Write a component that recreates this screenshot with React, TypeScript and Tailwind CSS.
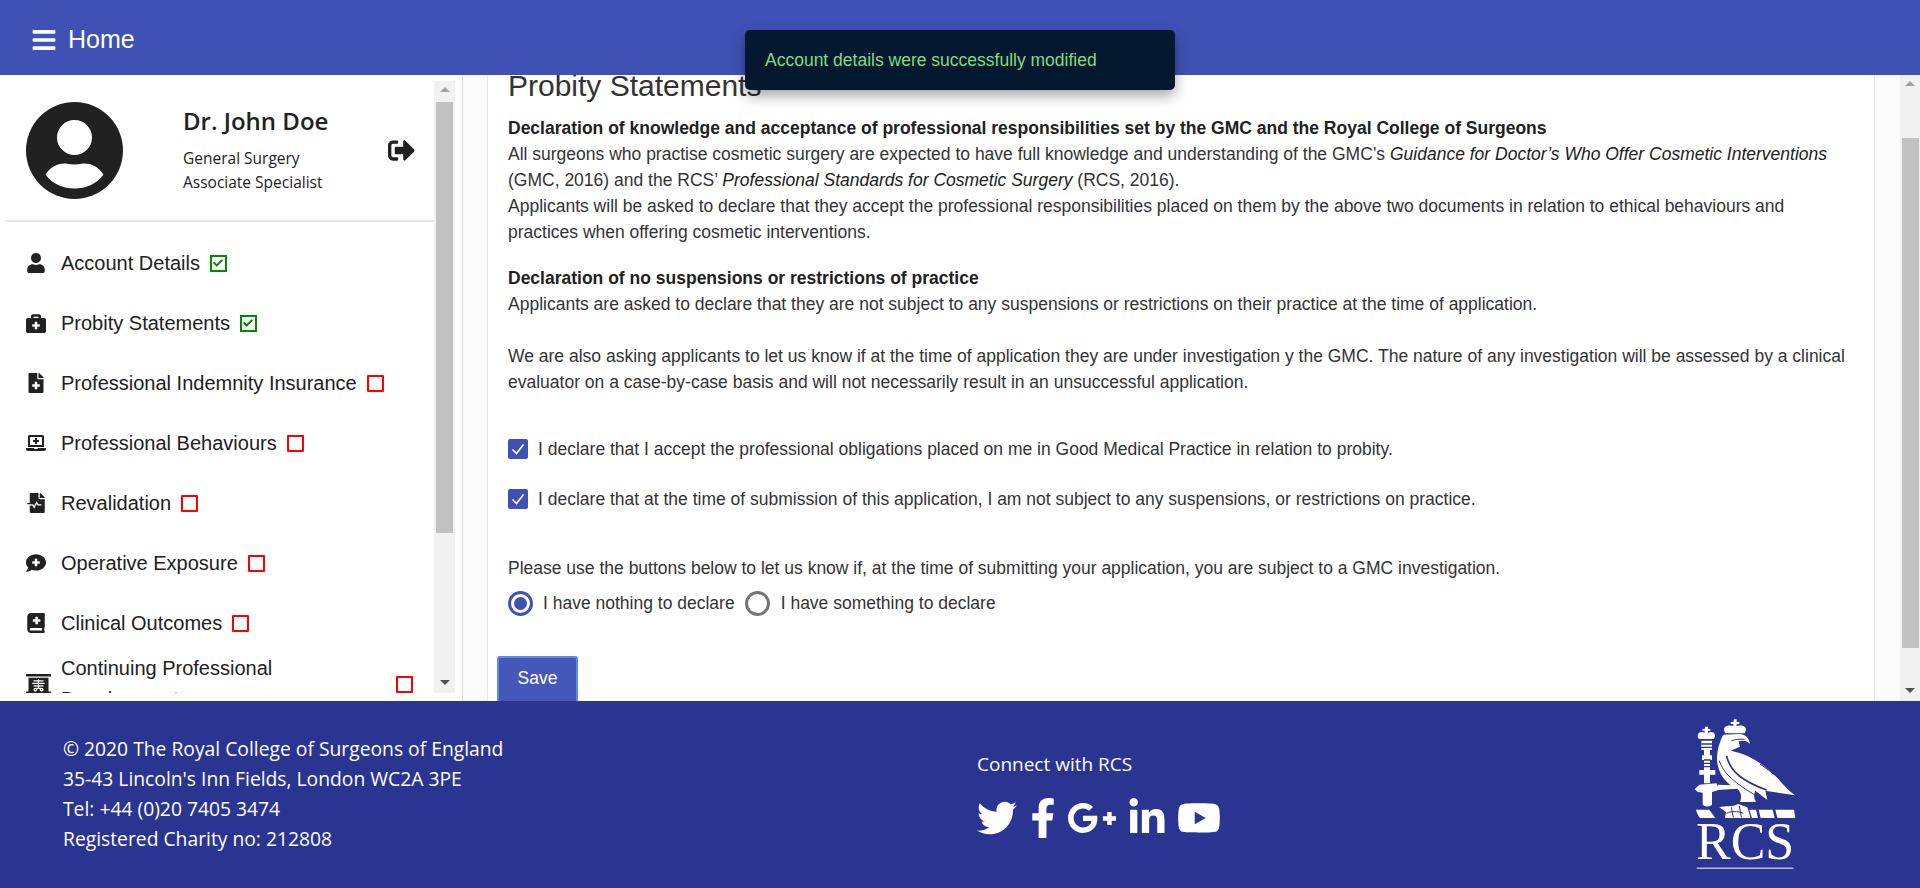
import React from 'react';
import {
  FaBars, FaBookMedical, FaBriefcaseMedical, FaCheck, FaCommentMedical, FaFacebookF, FaFileMedical,
  FaFileMedicalAlt, FaGooglePlusG, FaLaptopMedical, FaLinkedinIn, FaSignOutAlt, FaTwitter, FaUser, FaXRay, FaYoutube,
} from 'react-icons/fa';

const navItems = [
  { label: 'Account Details', icon: <FaUser size={20} />, done: true },
  { label: 'Probity Statements', icon: <FaBriefcaseMedical size={20} />, done: true },
  { label: 'Professional Indemnity Insurance', icon: <FaFileMedical size={20} />, done: false },
  { label: 'Professional Behaviours', icon: <FaLaptopMedical size={20} />, done: false },
  { label: 'Revalidation', icon: <FaFileMedicalAlt size={20} />, done: false },
  { label: 'Operative Exposure', icon: <FaCommentMedical size={20} />, done: false },
  { label: 'Clinical Outcomes', icon: <FaBookMedical size={20} />, done: false },
];

const StatusBox = ({ done }: { done: boolean }) =>
  done ? (
    <span className="ml-[10px] flex h-[17px] w-[17px] shrink-0 items-center justify-center border-2 border-[#008a00] text-[#008a00]">
      <FaCheck size={10} />
    </span>
  ) : (
    <span className="ml-[10px] h-[17px] w-[17px] shrink-0 rounded-[1px] border-2 border-[#ff0000]" />
  );

const Scrollbar = ({ top, thumb, thumbWidth }: { top: number; thumb: number; thumbWidth: string }) => (
  <div className="relative flex h-full w-full flex-col items-center bg-[#f1f1f1]">
    <div className="absolute top-[6px] h-0 w-0 border-x-[5px] border-b-[5px] border-x-transparent border-b-[#a3a3a3]" />
    <div className={`absolute bg-[#c1c1c1] ${thumbWidth}`} style={{ top, height: thumb }} />
    <div className="absolute bottom-[8px] h-0 w-0 border-x-[5px] border-t-[5px] border-x-transparent border-t-[#505050]" />
  </div>
);

const Avatar = () => (
  <svg width="97" height="97" viewBox="0 0 97 97" className="shrink-0">
    <circle cx="48.5" cy="48.5" r="48.5" fill="#212121" />
    <circle cx="48.5" cy="35.5" r="17.5" fill="#fff" />
    <path d="M19.5 72.5C25 64 33 61 40 61.5c6 1.300 11 1.300 17 0C64 61 72 64 77.500 72.500C71 82 60 86.500 48.500 86.500S26 82 19.500 72.500Z" fill="#fff" />
  </svg>
);

const CheckedBox = () => (
  <span className="flex h-[20px] w-[20px] shrink-0 items-center justify-center rounded-[2px] bg-[#3f51b5] text-white">
    <svg width="14" height="14" viewBox="0 0 14 14" fill="none" stroke="#fff" strokeWidth="1.600"><path d="M1.500 7.500 5.500 11.500 12.500 2.500" /></svg>
  </span>
);

const RcsLogo = () => (
  <div className="relative h-[187px] w-[160px]">
    <svg width="160" height="188" viewBox="0 3 480 564" className="absolute inset-0">
      <g fill="#fff">
        {/* left crown */}
        <path d="M136 80h8v7h7v5h-7v6c8-4 21-2 21 9 0 4-2 8-5 10h-42c-3-2-5-6-5-10 0-11 13-13 21-9v-6h-7v-5h7z" />
        {/* sceptre */}
        <path d="M124 122h32v28h-6v16h6v14h-6v30h16v14h-16v26h-18v-26h-14v-14h14v-30h-6v-14h6v-16h-8z" />
        <path d="M104 268l14-14 52-4 6 20-20 6v36c0 10-28 10-28 0v-34l-14-2z" />
        {/* eagle crown */}
        <path d="M222 58h8v8h8v6h-8v6c10-4 28-2 28 10 0 5-2 9-5 12h-56c-3-3-5-7-5-12 0-12 18-14 28-10v-6h-8v-6h8z" />
        {/* head, body and wing */}
        <path d="M190 104C178 125 168 160 172 190c4 25 18 50 40 66l-38-2-2 16 60-4c12 10 14 26 8 40h48c-8-14-6-24-2-34l36 28-6-28 89 14C370 260 350 225 320 205 285 175 250 160 212 152l28-12-4-16c14-4 26-2 34 8-2-17-12-28-30-30z" />
        {/* talons */}
        <path d="M178 322c17-6 37 0 57-10l27 10 10 32-77 0 3-18z" />
        {/* band */}
        <path d="M108 329h40l18 25h-46c-6-8-10-17-12-25zM268 329h20l6 25h-18zM296 329h42l6 25h-42zM346 329h56l4 25h-54z" />
        <rect x="110" y="503" width="290" height="3" />
      </g>
      <g fill="none" stroke="#2a3592" strokeWidth="4">
        <path d="M124 132h32M124 142h32M132 180h20M132 190h20M132 200h20" />
        <path d="M178 182c12 38 47 68 112 106" strokeWidth="3" />
        <path d="M200 168c10 47 50 77 120 102" strokeWidth="5" />
        <path d="M300 192l45 32M330 214l36 28" strokeWidth="3" />
        <path d="M214 122c12-4 26-5 40-4" strokeWidth="3" />
        <path d="M200 340c12-6 32-8 50 0M214 322l6 30M238 318l6 34" strokeWidth="3" />
      </g>
    </svg>
    <span className="absolute left-[36px] top-[111px] font-['Liberation_Serif',serif] text-[52px] leading-[60px] text-white">RCS</span>
  </div>
);

export default function App() {
  return (
    <div className="relative flex h-[888px] w-[1920px] flex-col overflow-hidden bg-white font-['Liberation_Sans',Arial,sans-serif] text-[17.5px] text-[#333]">
      <header className="relative z-10 flex h-[75px] shrink-0 items-center bg-[#3f51b5] pl-[31px] pt-[4px] text-white">
        <FaBars size={26} />
        <span className="ml-[11px] text-[25px]">Home</span>
      </header>

      <div className="absolute left-[745px] top-[30px] z-20 flex h-[60px] w-[430px] items-center rounded-[5px] bg-[#04192f] pl-[20px] text-[#7fdc80] shadow-[0_6px_14px_rgba(0,0,0,0.35)]">
        Account details were successfully modified
      </div>

      <div className="flex h-[626px] shrink-0">
        {/* sidebar */}
        <aside className="flex h-full w-[463px] shrink-0 border-r border-[#e0e0e0] pb-[8px] pl-[6px] pr-[7px] pt-[6px] text-[#212121]">
          <div className="min-w-0 flex-1 overflow-hidden">
            <div className="flex h-[141px] items-start border-b-2 border-[#e6e6e6] pl-[20px] pt-[21px]">
              <Avatar />
              <div className="ml-[60px] w-[205px] shrink-0 font-['Open_Sans',sans-serif]">
                <div className="mt-[3px] text-[24px] font-semibold leading-[32px]">Dr. John Doe</div>
                <div className="mt-[9px] text-[15.5px] leading-[24px]">General Surgery</div>
                <div className="text-[15.5px] leading-[24px]">Associate Specialist</div>
              </div>
              <FaSignOutAlt size={27} className="mt-[35px] shrink-0" />
            </div>
            <ul className="pt-[11px]">
              {navItems.map((item) => (
                <li key={item.label} className="flex h-[60px] items-center pl-[20px]">
                  <span className="flex w-[36px] shrink-0">{item.icon}</span>
                  <span className="-ml-[1px] text-[20px]">{item.label}</span>
                  <StatusBox done={item.done} />
                </li>
              ))}
              <li className="flex items-center pl-[20px]">
                <span className="flex w-[36px] shrink-0"><FaXRay size={20} className="h-[20px] w-[25px]" /></span>
                <span className="-ml-[1px] w-[325px] text-[20px] leading-[31px]">Continuing Professional Development</span>
                <StatusBox done={false} />
              </li>
            </ul>
          </div>
          <div className="h-full w-[21px] shrink-0">
            <Scrollbar top={21} thumb={431} thumbWidth="w-[17px]" />
          </div>
        </aside>

        {/* main panel */}
        <main className="flex h-full min-w-0 flex-1 overflow-hidden bg-[#fafafa] pl-[24px]">
          <div className="h-full w-[1388px] shrink-0 border-x border-[#e8e8e8] bg-white px-[20px]">
            <h1 className="-mt-[7px] text-[30px] font-normal leading-[36px]">Probity Statements</h1>
            <div className="mt-[11px] leading-[26px]">
              <p className="font-bold text-[#212121]">Declaration of knowledge and acceptance of professional responsibilities set by the GMC and the Royal College of Surgeons</p>
              <p>All surgeons who practise cosmetic surgery are expected to have full knowledge and understanding of the GMC’s <em className="text-[#212121]">Guidance for Doctor’s Who Offer Cosmetic Interventions</em> (GMC, 2016) and the RCS’ <em className="text-[#212121]">Professional Standards for Cosmetic Surgery</em> (RCS, 2016).</p>
              <p>Applicants will be asked to declare that they accept the professional responsibilities placed on them by the above two documents in relation to ethical behaviours and practices when offering cosmetic interventions.</p>
              <p className="mt-[20px] font-bold text-[#212121]">Declaration of no suspensions or restrictions of practice</p>
              <p>Applicants are asked to declare that they are not subject to any suspensions or restrictions on their practice at the time of application.</p>
              <p className="mt-[26px]">We are also asking applicants to let us know if at the time of application they are under investigation y the GMC. The nature of any investigation will be assessed by a clinical evaluator on a case-by-case basis and will not necessarily result in an unsuccessful application.</p>
            </div>

            <label className="mt-[41px] flex h-[26px] items-center">
              <CheckedBox />
              <span className="ml-[10px]">I declare that I accept the professional obligations placed on me in Good Medical Practice in relation to probity.</span>
            </label>
            <label className="mt-[24px] flex h-[26px] items-center">
              <CheckedBox />
              <span className="ml-[10px]">I declare that at the time of submission of this application, I am not subject to any suspensions, or restrictions on practice.</span>
            </label>

            <p className="mt-[43px] leading-[26px]">Please use the buttons below to let us know if, at the time of submitting your application, you are subject to a GMC investigation.</p>
            <div className="mt-[9px] flex h-[26px] items-center">
              <span className="flex h-[25px] w-[25px] shrink-0 items-center justify-center rounded-full border-[3px] border-[#3f51b5]">
                <span className="h-[13px] w-[13px] rounded-full bg-[#3f51b5]" />
              </span>
              <span className="ml-[10px]">I have nothing to declare</span>
              <span className="ml-[10px] h-[25px] w-[25px] shrink-0 rounded-full border-[3px] border-[#757575]" />
              <span className="ml-[11px]">I have something to declare</span>
            </div>

            <button className="-ml-[11px] mt-[40px] h-[56px] w-[81px] rounded-[3px] border-2 border-[#5a8de8] bg-[#4557b9] pb-[12px] text-white">Save</button>
          </div>
          <div className="h-full w-[25px] shrink-0" />
          <div className="h-full w-[20px] shrink-0">
            <Scrollbar top={63} thumb={510} thumbWidth="w-[17px]" />
          </div>
        </main>
      </div>

      {/* footer */}
      <footer className="flex h-[187px] shrink-0 bg-[#2a3592] font-['Open_Sans',sans-serif] text-white">
        <div className="w-[977px] shrink-0 pl-[63px] pt-[33px] text-[19.3px] leading-[30px]">
          <div>© 2020 The Royal College of Surgeons of England</div>
          <div>35-43 Lincoln's Inn Fields, London WC2A 3PE</div>
          <div>Tel: +44 (0)20 7405 3474</div>
          <div>Registered Charity no: 212808</div>
        </div>
        <div className="w-[683px] shrink-0 pt-[48px]">
          <div className="text-[19px] leading-[30px]">Connect with RCS</div>
          <div className="mt-[14px] flex items-center">
            <FaTwitter size={40} />
            <FaFacebookF size={40} className="ml-[6px]" />
            <FaGooglePlusG size={50} className="ml-[4px]" />
            <FaLinkedinIn size={40} className="ml-[10px]" />
            <FaYoutube size={44} className="ml-[10px]" />
          </div>
        </div>
        <RcsLogo />
      </footer>
    </div>
  );
}
